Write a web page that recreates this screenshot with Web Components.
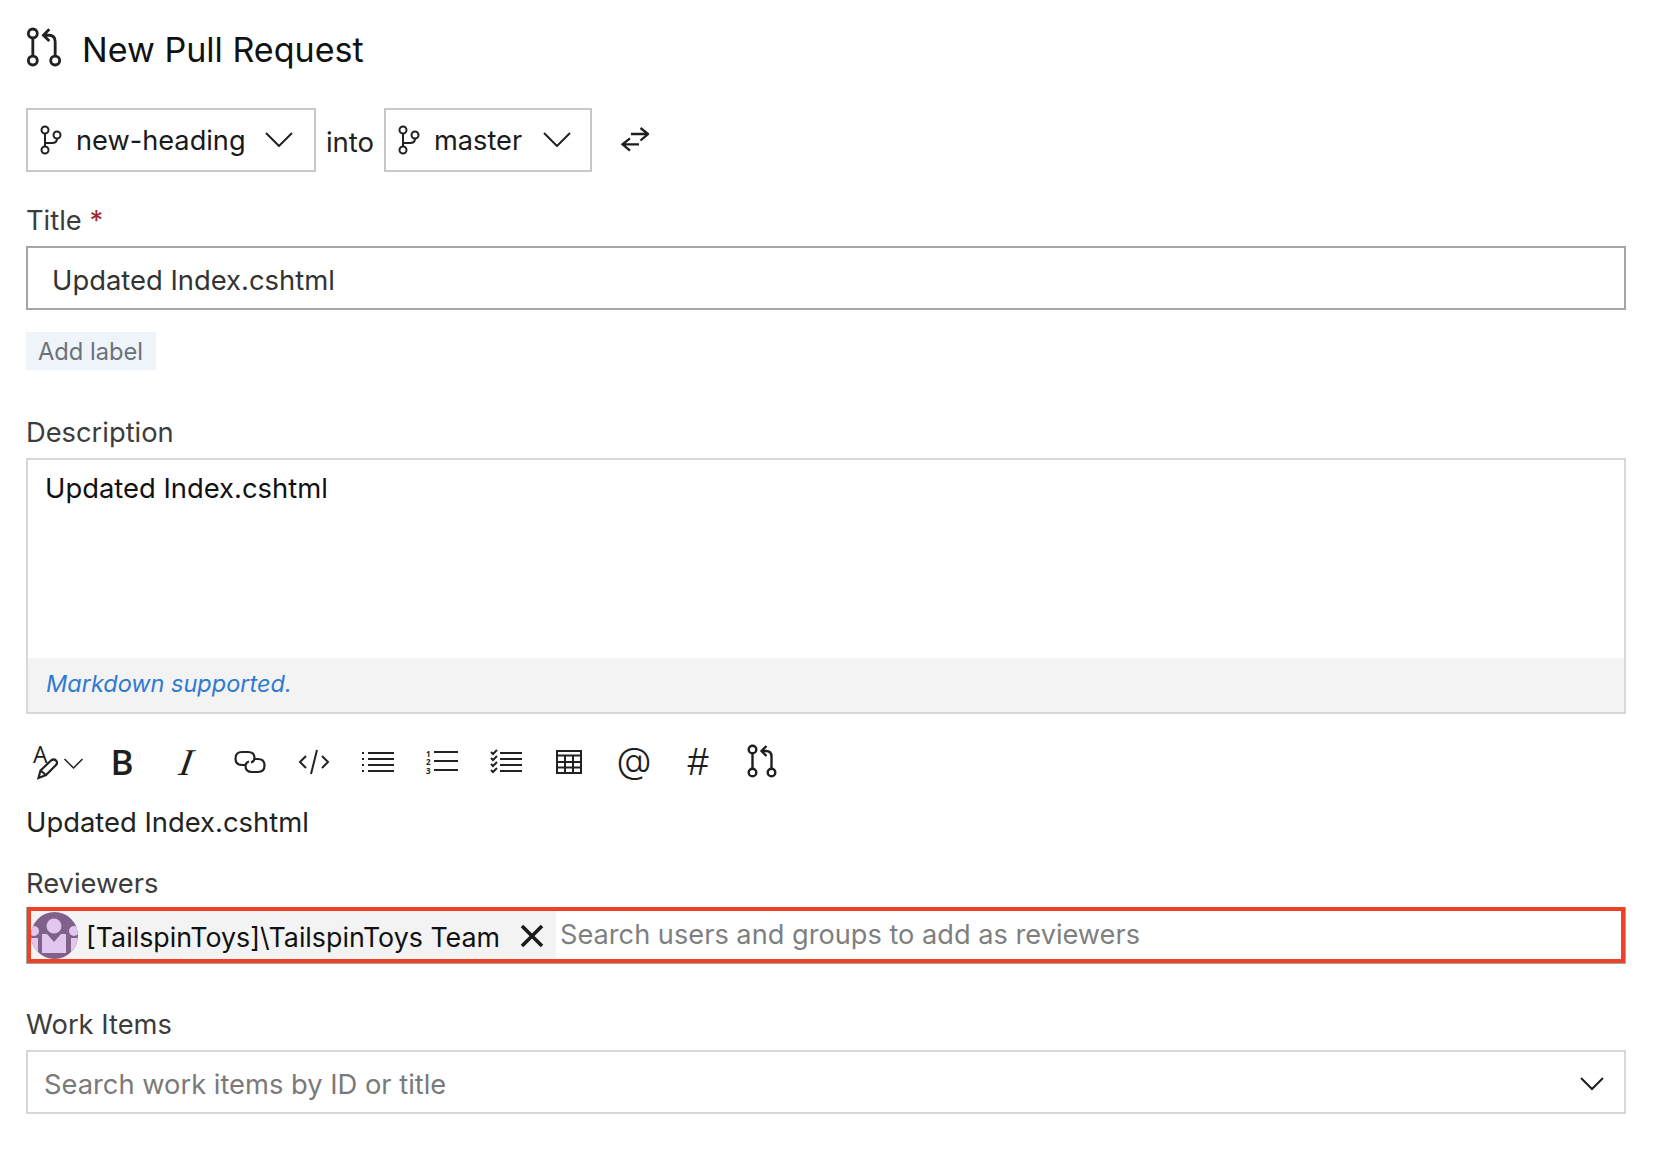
<!DOCTYPE html>
<html lang="en"><head><meta charset="utf-8"><title>New Pull Request</title>
<style>
html,body{margin:0;background:#fff}
body{font-family:Inter,"Noto Sans",sans-serif;color:#111;width:1654px;height:1152px;overflow:hidden}
pr-form{display:block;padding:0 28px 0 26px}
</style></head><body>
<template id="pr-icon-t"><style>:host{display:inline-flex}svg{display:block;width:100%;height:100%}</style>
<svg viewBox="0 0 30 34" fill="none" stroke="currentColor" stroke-width="2.4"><circle cx="5.5" cy="5.5" r="3.8"/><circle cx="5.5" cy="28.5" r="3.8"/><circle cx="24.5" cy="28.5" r="3.8"/><path d="M5.5 9.3V24.7M24.500 24.700V12.500Q24.500 7 19 7H14.500M19.500 2L14.500 7L19.500 12"/></svg></template>
<template id="branch-t"><style>:host{display:block;height:64px;box-sizing:border-box;border:2px solid #c8c8c8;background:#fff}
.r{display:flex;align-items:center;height:100%;padding:0 var(--pad,21px) 0 12px;box-sizing:border-box}
svg.b{width:22px;height:30px;flex:none}svg.c{width:28px;height:15px;flex:none;margin:0 0 2px auto}
.t{margin-left:14px;font-size:27.200px;color:#1a1a1a}</style>
<div class="r"><svg class="b" viewBox="0 0 22 30" fill="none" stroke="#222" stroke-width="2"><circle cx="5" cy="5" r="3.500"/><circle cx="5" cy="25" r="3.500"/><circle cx="17" cy="10" r="3.500"/><path d="M5 8.500V21.500M17 13.500Q17 18 12 18H5"/></svg><span class="t"><slot></slot></span><svg class="c" viewBox="0 0 28 15" fill="none" stroke="#222" stroke-width="2"><path d="M1 1L14 14L27 1"/></svg></div></template>
<template id="label-t"><style>:host{display:block;height:32px;font-size:27.300px;line-height:34px;color:#3c3c3c}</style><slot></slot></template>
<template id="head-t"><style>:host{display:flex;align-items:center;height:99px}pr-icon{width:36px;height:40px;color:#222;margin-top:-6px}h1{margin:0 0 0 20px;font-weight:400;font-size:34.100px;color:#111}</style><pr-icon></pr-icon><h1><slot></slot></h1></template>
<template id="row-t"><style>:host{display:flex;align-items:stretch;margin-top:9px;height:64px}
.i{width:68px;display:flex;align-items:center;justify-content:center;font-size:27.500px;padding-top:3px;box-sizing:border-box;color:#222}
.s{display:flex;align-items:center;margin-left:29px}svg{width:28px;height:25px;margin-top:-1px}</style>
<branch-select style="width:290px">new-heading</branch-select><span class="i">into</span><branch-select style="width:208px;--pad:19px">master</branch-select>
<span class="s"><svg viewBox="0 0 28 25" fill="none" stroke="#1e1e1e" stroke-width="2.300"><path d="M10 7H27M19.500 1L27 7L19.500 13.500"/><path d="M18 17.300H1.500M9 11.300L1.500 17.300L9 23.700"/></svg></span></template>
<template id="input-t"><style>:host{display:block;margin-top:11px;height:64px;box-sizing:border-box;border:2px solid #a6a6a6;padding:0 0 0 24px;line-height:64px;font-size:27.400px;color:#333}</style><slot></slot></template>
<template id="tag-t"><style>:host{display:block;margin-top:22px;width:130px;height:38px;box-sizing:border-box;background:#eff4fb;color:#6c7278;font-size:23.700px;line-height:40px;padding-left:12px}</style><slot></slot></template>
<template id="desc-t"><style>:host{display:flex;flex-direction:column;margin-top:10px;height:256px;box-sizing:border-box;border:2px solid #d8d8d8}
.m{flex:1;padding:10px 0 0 17px;font-size:27.400px;line-height:36px;color:#111}
.f{height:54px;background:#f3f3f3;font-style:italic;font-size:23.500px;line-height:52px;padding-left:18px;color:#2f7ad0}</style>
<div class="m"><slot></slot></div><div class="f">Markdown supported.</div></template>
<template id="bar-t"><style>:host{display:flex;margin-top:26px;height:44px;color:#1e1e1e}
span{width:64px;flex:none;display:flex;align-items:center;justify-content:center;font-size:30px;line-height:44px}
svg{display:block;overflow:visible}
.b{font:600 35px/42px "Open Sans",sans-serif}.i{font:italic 400 38px/44px "Liberation Serif",serif}.i i{display:block;transform:skewX(-10deg)}.a{font:300 36px/36px Inter,sans-serif;padding-bottom:4px;box-sizing:border-box;height:44px}.h{font:400 38px/44px "Liberation Sans",sans-serif}
text{font-family:"Open Sans",sans-serif;stroke:none;fill:#1e1e1e}</style>
<span><svg width="52" height="36" viewBox="0 0 52 36" fill="none" stroke="#222" stroke-width="2"><text x="1" y="19" font-size="23">A</text><path d="M6.500 34L8.500 26.500L19 16.500Q22 14.500 24 16.500Q26 19 24 21L14 31ZM8.500 26.500L14 31" stroke-width="2.200"/><path d="M32.500 15L41.500 24L50.500 15" stroke-width="1.500"/></svg></span>
<span class="b">B</span><span class="i"><i>I</i></span>
<span><svg width="32" height="24" viewBox="0 0 32 24" fill="none" stroke="#222" stroke-width="2.200"><path d="M12 15H8Q1.500 15 1.500 8.500Q1.500 2 8 2H14Q20.500 2 20.500 8Q20.500 11.500 17 12.500"/><path d="M20 9H24Q30.500 9 30.500 15.500Q30.500 22 24 22H18Q11.500 22 11.500 16Q11.500 12.500 15 11.500"/></svg></span>
<span><svg width="32" height="26" viewBox="0 0 32 26" fill="none" stroke="#222" stroke-width="2"><path d="M8 7L2 13L8 19M24 7L30 13L24 19M19 1L13 25"/></svg></span>
<span><svg width="32" height="22" viewBox="0 0 32 22" fill="none" stroke="#222" stroke-width="2"><path d="M6 2H32M6 8H32M6 14H32M6 20H32"/><path d="M0 2H2M0 8H2M0 14H2M0 20H2"/></svg></span>
<span><svg width="32" height="26" viewBox="0 0 32 26" fill="none" stroke="#222" stroke-width="2"><path d="M8 3H32M8 12H32M8 21H32"/><text x="0" y="8" font-size="8" font-weight="700">1</text><text x="0" y="16" font-size="8" font-weight="700">2</text><text x="0" y="25" font-size="8" font-weight="700">3</text></svg></span>
<span><svg width="32" height="24" viewBox="0 0 32 24" fill="none" stroke="#222" stroke-width="2"><path d="M10 3H32M10 9H32M10 15H32M10 21H32"/><path d="M1 2L3 4L7 0M1 8L3 10L7 6M1 14L3 16L7 12M1 20L3 22L7 18"/></svg></span>
<span><svg width="26" height="24" viewBox="0 0 26 24" fill="none" stroke="#222" stroke-width="2" style="margin-left:-2px"><path d="M1 1H25V23H1ZM1 5.500H25M1 12H25M1 17.500H25M9 6V23M17 6V23"/></svg></span>
<span class="a">@</span><span class="h">#</span>
<span><pr-icon style="width:30px;height:34px;margin-top:-2px"></pr-icon></span></template>
<template id="prev-t"><style>:host{display:block;margin-top:23px;height:32px;font-size:27.400px;line-height:30px;color:#222}</style><slot></slot></template>
<template id="rev-t"><style>:host{display:flex;position:relative;margin-top:8px;height:57px;box-sizing:border-box;border:2px solid #a6a6a6;align-items:stretch;font-size:27.200px}
.c{display:flex;align-items:center;width:528px;background:#f3f3f3;flex:none;margin:2px 0}
svg.a{width:47px;height:47px;flex:none;margin-left:3px}
.n{margin-left:8px;white-space:nowrap;color:#111;font-size:26.800px;padding-top:2px}
svg.x{width:24px;height:24px;margin-left:auto;margin-right:12px;flex:none}
.p{margin-left:4px;line-height:52px;color:#7f7f7f;white-space:nowrap}
.red{position:absolute;left:-1px;top:-2px;right:-1px;bottom:-1px;border:4px solid #ef4128;pointer-events:none}</style>
<div class="c"><svg class="a" viewBox="0 0 47 47"><defs><clipPath id="k"><circle cx="23.500" cy="23.500" r="23.500"/></clipPath></defs><g clip-path="url(#k)"><rect width="47" height="47" fill="#806189"/><circle cx="23" cy="14" r="7.500" fill="#e2c6ed"/><path d="M11 22H16L23 30L30 22H35V41H11Z" fill="#e2c6ed"/><circle cx="3" cy="19" r="5" fill="#e2c6ed"/><circle cx="43" cy="19" r="5" fill="#e2c6ed"/><path d="M0 26H7V40H0ZM40 26H47V40H40Z" fill="#e2c6ed"/></g></svg>
<span class="n"><slot></slot></span><svg class="x" viewBox="0 0 24 24" fill="none" stroke="#1a1a1a" stroke-width="3.600"><path d="M2 2L22 22M22 2L2 22"/></svg></div>
<span class="p">Search users and groups to add as reviewers</span><span class="red"></span></template>
<template id="work-t"><style>:host{display:flex;align-items:center;margin-top:10px;height:64px;box-sizing:border-box;border:2px solid #d8d8d8;padding:4px 20px 0 16px;font-size:27.300px;color:#7a7a7a}
svg{width:24px;height:14px;margin-left:auto}</style><slot></slot><svg viewBox="0 0 24 14" fill="none" stroke="#1e1e1e" stroke-width="2"><path d="M1 1L12 12L23 1"/></svg></template>

<pr-form>
<pr-heading>New Pull Request</pr-heading>
<branch-row></branch-row>
<field-label style="margin-top:32px">Title <span style="color:#a4262c">*</span></field-label>
<title-input style="margin-top:10px">Updated Index.cshtml</title-input>
<add-label>Add label</add-label>
<field-label style="margin-top:46px">Description</field-label>
<desc-box>Updated Index.cshtml</desc-box>
<format-bar></format-bar>
<desc-preview>Updated Index.cshtml</desc-preview>
<field-label style="margin-top:28px">Reviewers</field-label>
<reviewer-box>[TailspinToys]\TailspinToys Team</reviewer-box>
<field-label style="margin-top:44px">Work Items</field-label>
<work-box>Search work items by ID or title</work-box>
</pr-form>
<script>
const map={'pr-icon':'pr-icon-t','branch-select':'branch-t','field-label':'label-t','pr-heading':'head-t','branch-row':'row-t','title-input':'input-t','add-label':'tag-t','desc-box':'desc-t','format-bar':'bar-t','desc-preview':'prev-t','reviewer-box':'rev-t','work-box':'work-t'};
for(const [n,t] of Object.entries(map)){
  customElements.define(n,class extends HTMLElement{constructor(){super();this.attachShadow({mode:'open'}).appendChild(document.getElementById(t).content.cloneNode(true));}});
}
</script>
</body></html>
